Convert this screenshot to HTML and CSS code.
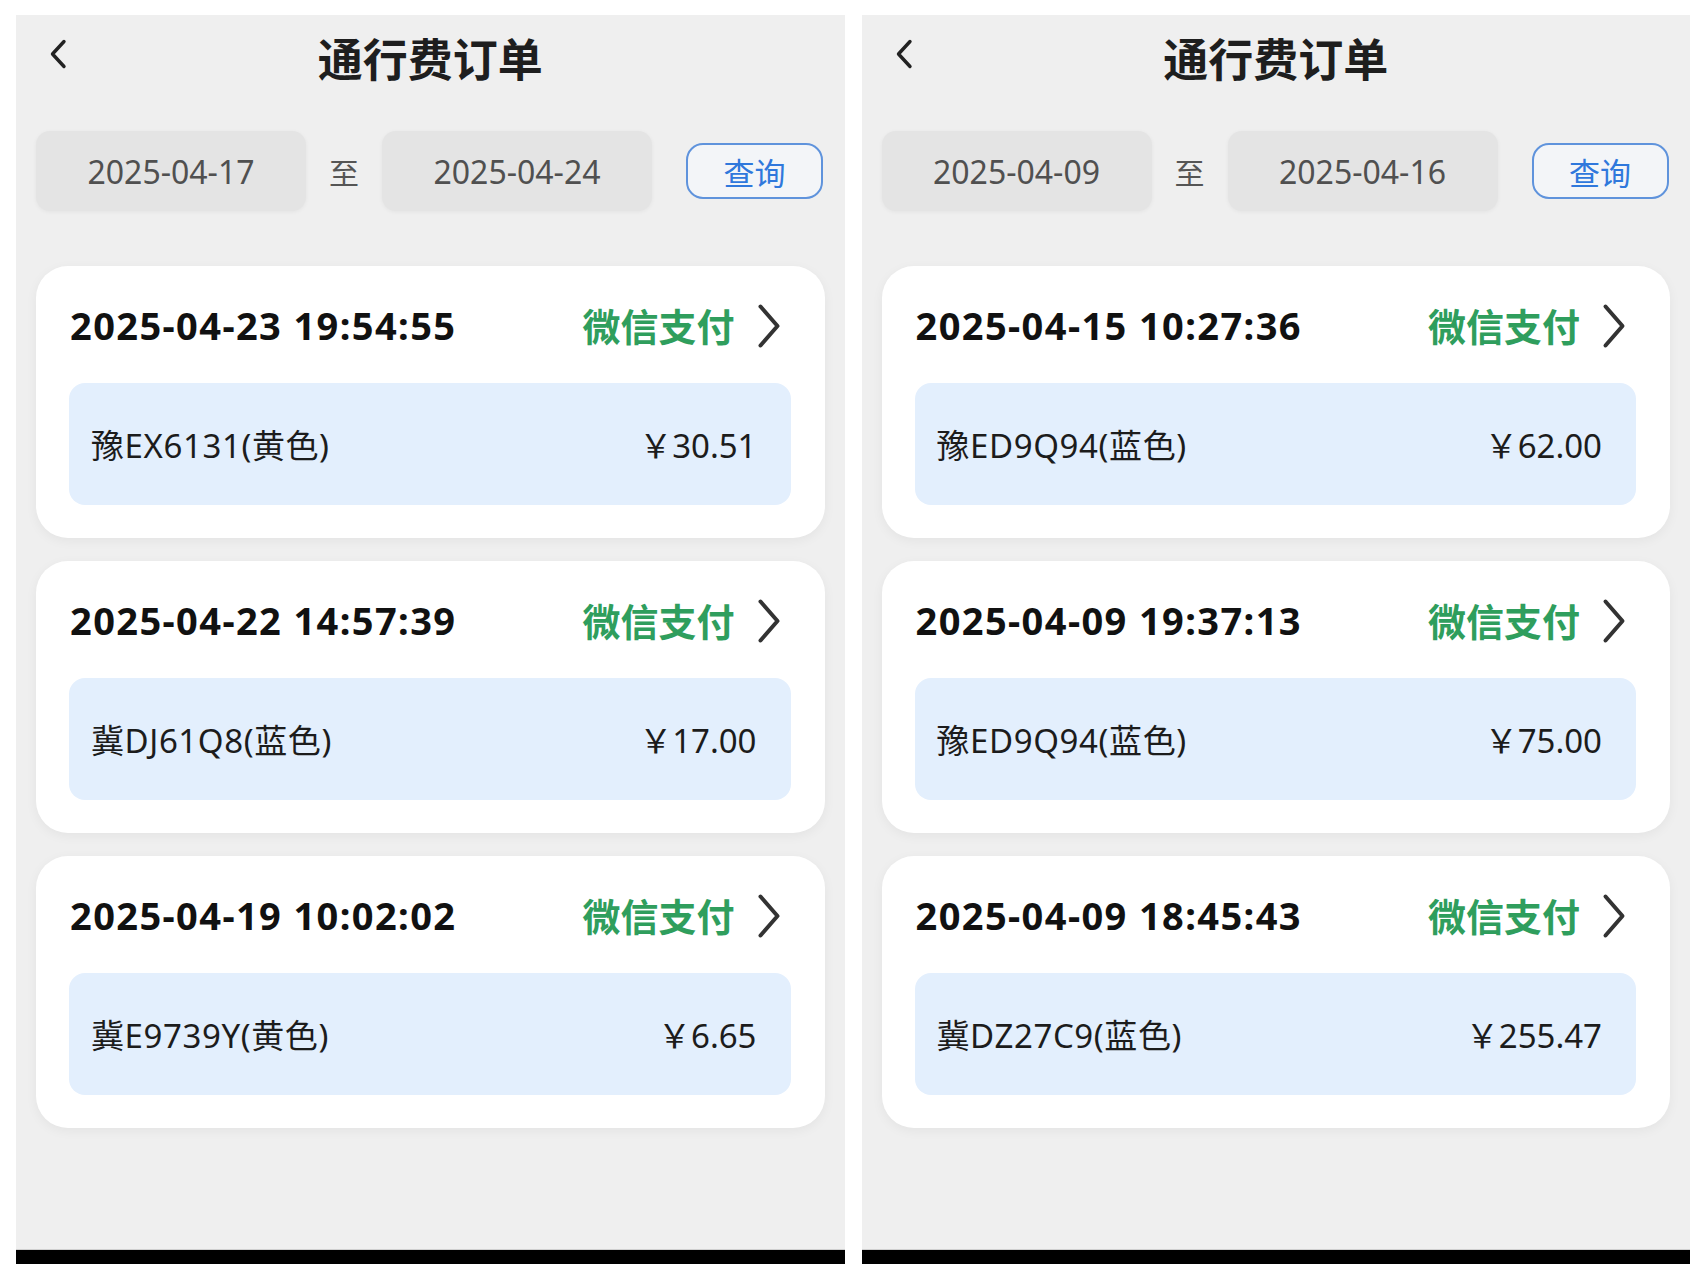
FILE: index.html
```html
<!DOCTYPE html>
<html lang="zh-CN">
<head>
<meta charset="utf-8">
<title>通行费订单</title>
<link rel="stylesheet" href="styles.css">
</head>
<body>
<div class="screens">
  <section class="phone">
    <header class="topbar">
      <span class="back"><svg viewBox="0 0 18 30" width="18" height="30"><path d="M15 2.5 L3.5 15 L15 27.5" fill="none" stroke="#222" stroke-width="3.4" stroke-linecap="round" stroke-linejoin="round"/></svg></span>
      <h1 class="title">通行费订单</h1>
      <span></span>
    </header>
    <div class="filter">
      <div class="date-box">2025-04-17</div>
      <span class="to">至</span>
      <div class="date-box">2025-04-24</div>
      <button class="query">查询</button>
    </div>
    <div class="orders">
      <article class="order">
        <div class="order-head"><span class="time">2025-04-23 19:54:55</span><span class="pay">微信支付</span><svg class="arrow" viewBox="0 0 24 46" width="24" height="46"><path d="M3.5 3.5 L20.5 23 L3.5 42.5" fill="none" stroke="#333" stroke-width="4" stroke-linecap="round" stroke-linejoin="round"/></svg></div>
        <div class="order-body"><span class="plate">豫EX6131(黄色)</span><span class="amount">￥30.51</span></div>
      </article>
      <article class="order">
        <div class="order-head"><span class="time">2025-04-22 14:57:39</span><span class="pay">微信支付</span><svg class="arrow" viewBox="0 0 24 46" width="24" height="46"><path d="M3.5 3.5 L20.5 23 L3.5 42.5" fill="none" stroke="#333" stroke-width="4" stroke-linecap="round" stroke-linejoin="round"/></svg></div>
        <div class="order-body"><span class="plate">冀DJ61Q8(蓝色)</span><span class="amount">￥17.00</span></div>
      </article>
      <article class="order">
        <div class="order-head"><span class="time">2025-04-19 10:02:02</span><span class="pay">微信支付</span><svg class="arrow" viewBox="0 0 24 46" width="24" height="46"><path d="M3.5 3.5 L20.5 23 L3.5 42.5" fill="none" stroke="#333" stroke-width="4" stroke-linecap="round" stroke-linejoin="round"/></svg></div>
        <div class="order-body"><span class="plate">冀E9739Y(黄色)</span><span class="amount">￥6.65</span></div>
      </article>
    </div>
    <div class="home-bar"></div>
  </section>

  <section class="phone">
    <header class="topbar">
      <span class="back"><svg viewBox="0 0 18 30" width="18" height="30"><path d="M15 2.5 L3.5 15 L15 27.5" fill="none" stroke="#222" stroke-width="3.4" stroke-linecap="round" stroke-linejoin="round"/></svg></span>
      <h1 class="title">通行费订单</h1>
      <span></span>
    </header>
    <div class="filter">
      <div class="date-box">2025-04-09</div>
      <span class="to">至</span>
      <div class="date-box">2025-04-16</div>
      <button class="query">查询</button>
    </div>
    <div class="orders">
      <article class="order">
        <div class="order-head"><span class="time">2025-04-15 10:27:36</span><span class="pay">微信支付</span><svg class="arrow" viewBox="0 0 24 46" width="24" height="46"><path d="M3.5 3.5 L20.5 23 L3.5 42.5" fill="none" stroke="#333" stroke-width="4" stroke-linecap="round" stroke-linejoin="round"/></svg></div>
        <div class="order-body"><span class="plate">豫ED9Q94(蓝色)</span><span class="amount">￥62.00</span></div>
      </article>
      <article class="order">
        <div class="order-head"><span class="time">2025-04-09 19:37:13</span><span class="pay">微信支付</span><svg class="arrow" viewBox="0 0 24 46" width="24" height="46"><path d="M3.5 3.5 L20.5 23 L3.5 42.5" fill="none" stroke="#333" stroke-width="4" stroke-linecap="round" stroke-linejoin="round"/></svg></div>
        <div class="order-body"><span class="plate">豫ED9Q94(蓝色)</span><span class="amount">￥75.00</span></div>
      </article>
      <article class="order">
        <div class="order-head"><span class="time">2025-04-09 18:45:43</span><span class="pay">微信支付</span><svg class="arrow" viewBox="0 0 24 46" width="24" height="46"><path d="M3.5 3.5 L20.5 23 L3.5 42.5" fill="none" stroke="#333" stroke-width="4" stroke-linecap="round" stroke-linejoin="round"/></svg></div>
        <div class="order-body"><span class="plate">冀DZ27C9(蓝色)</span><span class="amount">￥255.47</span></div>
      </article>
    </div>
    <div class="home-bar"></div>
  </section>
</div>
</body>
</html>
```
FILE: styles.css
```css
* { box-sizing: border-box; }
html, body { margin: 0; padding: 0; background: #ffffff; }
body {
  font-family: "Noto Sans", "Noto Sans CJK SC", sans-serif;
  color: #222;
  padding: 15px 16px 0 16px;
}
.screens {
  display: flex;
  gap: 17px;
}
.phone {
  flex: 1;
  height: 1249px;
  background: #efefef;
  display: flex;
  flex-direction: column;
  padding: 0 20px;
}
.topbar {
  height: 84px;
  display: grid;
  grid-template-columns: 1fr auto 1fr;
  align-items: center;
}
.back {
  display: flex;
  align-items: center;
  padding-left: 13px;
  margin-top: -6px;
}
.title {
  margin: 0;
  font-size: 45px;
  font-weight: 700;
  color: #1e1e1e;
  line-height: 1;
  font-family: "Noto Sans CJK SC", sans-serif;
}
.filter {
  margin-top: 32px;
  display: flex;
  align-items: center;
  height: 80px;
}
.date-box {
  width: 270px;
  height: 80px;
  border-radius: 14px;
  background: #e4e4e4;
  box-shadow: 0 1px 4px rgba(0,0,0,0.05);
  display: flex;
  align-items: center;
  justify-content: center;
  font-size: 32px;
  color: #505050;
}
.to {
  width: 30px;
  margin: 0 23px;
  font-size: 30px;
  color: #555;
  text-align: center;
  font-family: "Noto Sans CJK SC", sans-serif;
}
.query {
  margin-left: 34px;
  width: 137px;
  height: 56px;
  border: 2px solid #5f93dc;
  border-radius: 17px;
  background: #f3f5f8;
  color: #2f78dc;
  font-size: 31px;
  font-family: "Noto Sans CJK SC", sans-serif;
  padding: 0;
  line-height: 1;
}
.orders {
  margin-top: 55px;
  display: flex;
  flex-direction: column;
  gap: 23px;
}
.order {
  height: 272px;
  background: #ffffff;
  border-radius: 32px;
  box-shadow: 0 3px 12px rgba(0,0,0,0.05);
  display: flex;
  flex-direction: column;
}
.order-head {
  height: 117px;
  display: flex;
  align-items: center;
  padding: 0 44px 0 34px;
}
.time {
  flex: 1;
  font-size: 38px;
  font-weight: 700;
  color: #111;
  letter-spacing: 1.4px;
}
.pay {
  font-size: 38px;
  font-weight: 700;
  color: #2f9e5d;
  font-family: "Noto Sans CJK SC", sans-serif;
  margin-right: 22px;
}
.arrow { display: block; margin-top: 2px; }
.order-body {
  margin: 0 34px 0 33px;
  height: 122px;
  border-radius: 16px;
  background: #e3effd;
  display: flex;
  align-items: center;
  justify-content: space-between;
  padding: 0 34px 0 22px;
  font-size: 33px;
  color: #1c1c1c;
}
.plate { letter-spacing: 0.6px; }
.home-bar {
  margin-top: auto;
  height: 15px;
  background: #000;
  border-top: 1px solid #cfcfcf;
  margin-left: -20px;
  margin-right: -20px;
}
```
